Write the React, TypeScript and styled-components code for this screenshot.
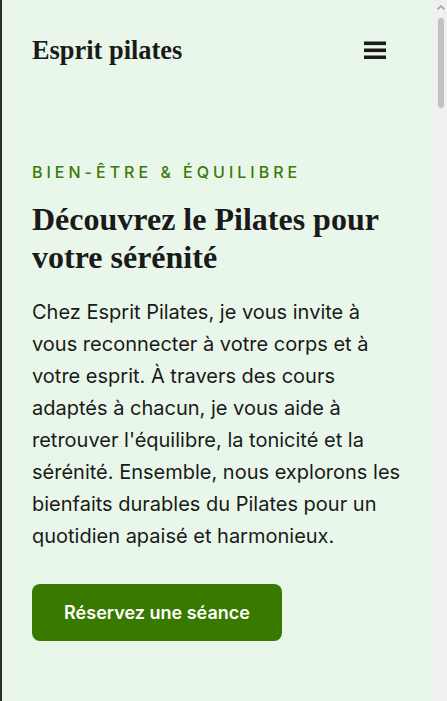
import React from "react";
import styled, { createGlobalStyle } from "styled-components";

const Global = createGlobalStyle`
  html, body {
    margin: 0;
    padding: 0;
    background: #e9f7ea;
  }
  * { box-sizing: border-box; }
  body {
    font-family: Inter, "Noto Sans", sans-serif;
    color: #1a1a1a;
  }
`;

const Page = styled.div`
  display: flex;
  align-items: flex-start;
  background: #e9f7ea;
`;

const Main = styled.main`
  flex: 1;
  min-width: 0;
  border-left: 2px solid #2e2e2e;
`;

const ScrollTrack = styled.div`
  position: sticky;
  top: 0;
  flex: 0 0 15px;
  height: 100vh;
  background: #f0f0f0;
  display: flex;
  flex-direction: column;
  align-items: center;
  padding-top: 5px;
`;

const ScrollArrow = styled.svg`
  display: block;
  margin-left: 2px;
`;

const ScrollThumb = styled.div`
  margin-top: 8px;
  margin-left: 2px;
  width: 6px;
  height: 90px;
  border-radius: 3px;
  background: #c1c1c1;
`;

const Header = styled.header`
  display: flex;
  align-items: center;
  justify-content: space-between;
  padding: 35px 46px 0 30px;
  height: 65px;
`;

const Logo = styled.a`
  font-family: "Liberation Serif", "Times New Roman", serif;
  font-weight: 700;
  font-size: 26.4px;
  line-height: 30px;
  color: #1a1a1a;
  text-decoration: none;
`;

const MenuButton = styled.button`
  display: flex;
  align-items: center;
  justify-content: center;
  width: 22px;
  height: 30px;
  padding: 0;
  border: none;
  background: transparent;
  cursor: pointer;
`;

const Hero = styled.section`
  display: flex;
  flex-direction: column;
  align-items: flex-start;
  padding: 94.5px 32px 0 30px;
  min-height: calc(100vh - 65px);
`;

const Eyebrow = styled.p`
  margin: 0;
  font-family: Inter, sans-serif;
  font-weight: 500;
  font-size: 16px;
  line-height: 24px;
  letter-spacing: 0.25em;
  color: #3a7a08;
  text-transform: uppercase;
`;

const Title = styled.h1`
  margin: 16px 0 0;
  font-family: "Liberation Serif", "Times New Roman", serif;
  font-weight: 700;
  font-size: 32px;
  line-height: 1.2;
  color: #1a1a1a;
`;

const Lead = styled.p`
  margin: 20px 0 0;
  font-family: Inter, sans-serif;
  font-size: 20px;
  line-height: 32px;
  color: #1a1a1a;
  white-space: nowrap;
`;

const Line = styled.span`
  display: block;
`;

const CtaButton = styled.a`
  display: flex;
  align-items: center;
  justify-content: center;
  margin-top: 32px;
  width: 250px;
  height: 57px;
  border-radius: 8px;
  background: #387a00;
  color: #ffffff;
  font-family: Inter, sans-serif;
  font-weight: 600;
  font-size: 18px;
  text-decoration: none;
`;

const Section = styled.section`
  min-height: 100vh;
  padding: 96px 32px 0 30px;
`;

const SectionTitle = styled.h2`
  margin: 0 0 20px;
  font-family: "Liberation Serif", "Times New Roman", serif;
  font-weight: 700;
  font-size: 28px;
  line-height: 1.2;
  color: #1a1a1a;
`;

const SectionText = styled.p`
  margin: 0;
  font-size: 18px;
  line-height: 1.8;
  max-width: 370px;
`;

const Footer = styled.footer`
  padding: 48px 32px;
  font-size: 14px;
  color: #3d4a3d;
`;

const BarsIcon = () => (
  <svg width="22" height="18" viewBox="0 0 22 18" aria-hidden="true">
    <rect x="0" y="0.5" width="22" height="3.6" fill="#1a1a1a" />
    <rect x="0" y="7.5" width="22" height="3.6" fill="#1a1a1a" />
    <rect x="0" y="14.5" width="22" height="3.6" fill="#1a1a1a" />
  </svg>
);

const leadLines = [
  "Chez Esprit Pilates, je vous invite à",
  "vous reconnecter à votre corps et à",
  "votre esprit. À travers des cours",
  "adaptés à chacun, je vous aide à",
  "retrouver l'équilibre, la tonicité et la",
  "sérénité. Ensemble, nous explorons les",
  "bienfaits durables du Pilates pour un",
  "quotidien apaisé et harmonieux.",
];

const sections = [
  { title: "Mes cours", text: "Des séances individuelles et collectives, adaptées à tous les niveaux, pour renforcer votre corps en douceur." },
  { title: "Les bienfaits", text: "Posture, souplesse, respiration et concentration : le Pilates accompagne votre bien-être au quotidien." },
  { title: "À propos", text: "Professeure certifiée, je partage ma passion du mouvement conscient depuis de nombreuses années." },
  { title: "Tarifs", text: "Séance découverte, cartes de cours et abonnements : choisissez la formule qui vous convient." },
  { title: "Témoignages", text: "Découvrez les retours de celles et ceux qui ont retrouvé équilibre et sérénité." },
  { title: "Contact", text: "Une question ? Écrivez-moi, je vous répondrai avec plaisir." },
];

export default function App() {
  return (
    <>
      <Global />
      <Page>
        <Main>
          <Header>
            <Logo href="#">Esprit pilates</Logo>
            <MenuButton aria-label="Menu">
              <BarsIcon />
            </MenuButton>
          </Header>
          <Hero>
            <Eyebrow>Bien-être &amp; équilibre</Eyebrow>
            <Title>Découvrez le Pilates pour votre sérénité</Title>
            <Lead>
              {leadLines.map((l) => (
                <Line key={l}>{l}</Line>
              ))}
            </Lead>
            <CtaButton href="#">Réservez une séance</CtaButton>
          </Hero>
          {sections.map((s) => (
            <Section key={s.title}>
              <SectionTitle>{s.title}</SectionTitle>
              <SectionText>{s.text}</SectionText>
            </Section>
          ))}
          <Footer>© Esprit Pilates</Footer>
        </Main>
        <ScrollTrack aria-hidden="true">
          <ScrollArrow width="8" height="5" viewBox="0 0 8 5">
            <path d="M0.5 4.5 L4 1 L7.5 4.5" fill="none" stroke="#a3a3a3" strokeWidth="1.6" />
          </ScrollArrow>
          <ScrollThumb />
        </ScrollTrack>
      </Page>
    </>
  );
}
